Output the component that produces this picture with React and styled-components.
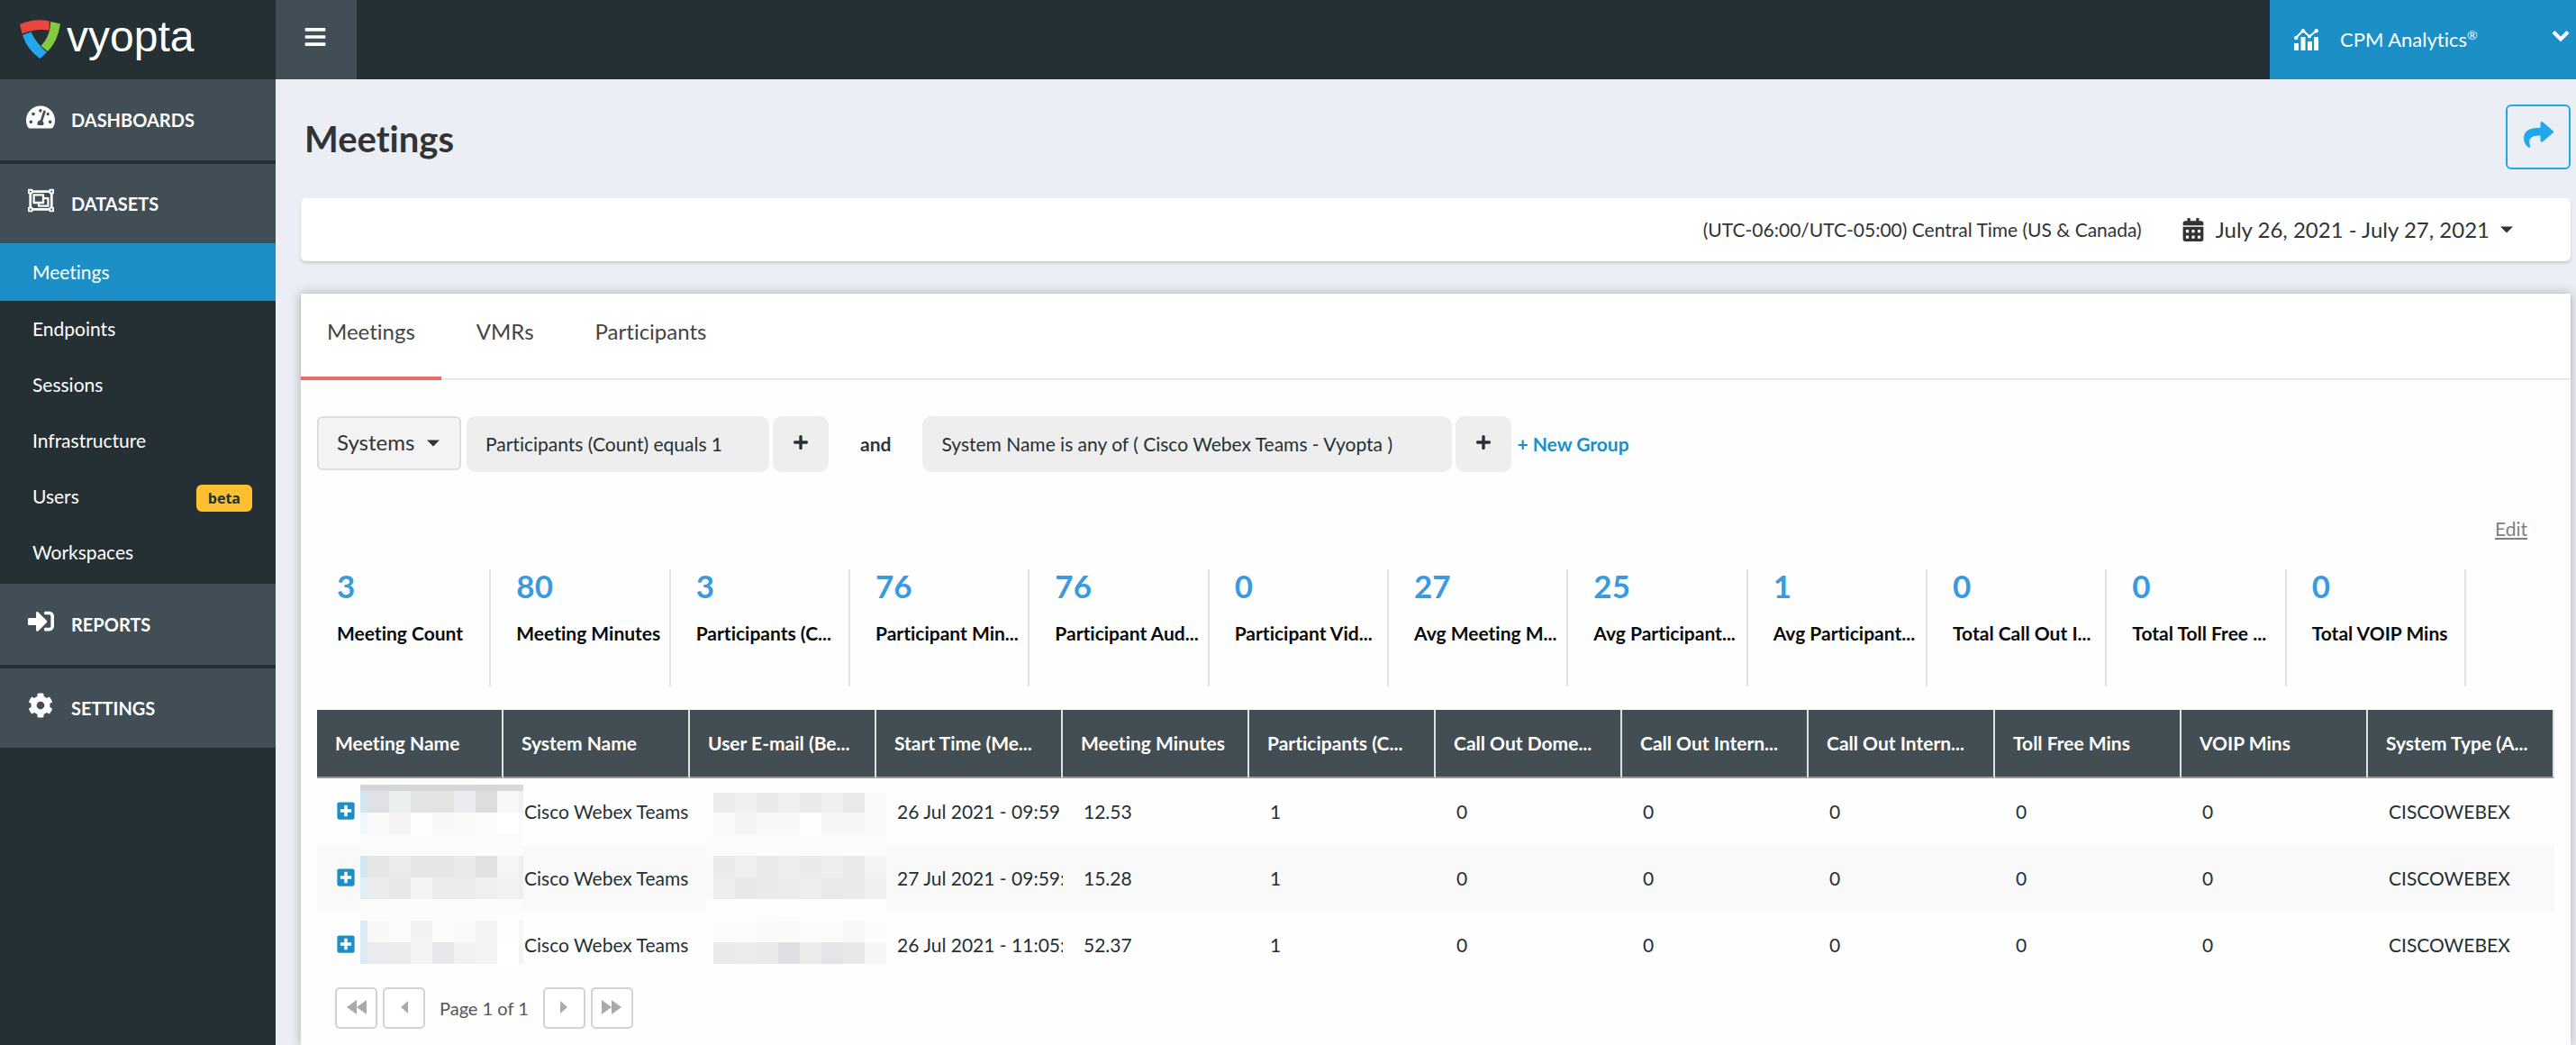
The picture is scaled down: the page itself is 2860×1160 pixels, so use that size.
import React from "react";
import styled, { createGlobalStyle } from "styled-components";
import {
  FaBars,
  FaCalendarAlt,
  FaCog,
  FaPlus,
  FaPlusSquare,
  FaRegObjectGroup,
  FaShare,
  FaSignInAlt,
  FaTachometerAlt,
} from "react-icons/fa";

const color = {
  dark: "#253035",
  slate: "#424e55",
  blue: "#1b8fc6",
  sky: "#22a7ea",
  number: "#3b9ade",
  page: "#ebeef4",
  text: "#333333",
};

const GlobalStyle = createGlobalStyle`
  *, *::before, *::after { box-sizing: border-box; }
  body {
    margin: 0;
    background: ${color.page};
    color: ${color.text};
    font-family: Lato, "Liberation Sans", sans-serif;
    font-size: 21px;
    line-height: 26px;
    font-variant-ligatures: none;
  }
  button, select { font: inherit; font-variant-ligatures: none; color: inherit; margin: 0; cursor: pointer; }
  h1, ul, p, dl, dd { margin: 0; padding: 0; }
  ul { list-style: none; }
  svg { display: block; flex: none; }
`;

/* ---------- frame ---------- */

const Page = styled.div`
  display: grid;
  grid-template-columns: 306px minmax(0, 1fr);
  min-height: 100vh;
`;

const Sidebar = styled.aside`
  background: ${color.dark};
  color: #fff;
`;

const Brand = styled.a`
  display: flex;
  align-items: center;
  gap: 6px;
  height: 88px;
  padding-left: 22px;
  color: #fff;
  text-decoration: none;
`;

const BrandName = styled.span`
  font: 48px/52px "Liberation Sans", Arial, sans-serif;
  padding-bottom: 6px;
`;

const Section = styled.a`
  display: flex;
  align-items: center;
  gap: 14px;
  height: ${(p) => p.$height || 88}px;
  padding-left: 25px;
  background: ${color.slate};
  color: #fff;
  font-size: 20px;
  font-weight: 700;
  text-decoration: none;
  & + & { margin-top: 4px; }
`;

const SectionIcon = styled.span`
  display: flex;
  justify-content: center;
  width: 40px;
  padding-bottom: 7px;
`;

const SubList = styled.ul`
  padding-bottom: 4px;
`;

const SubLink = styled.a`
  display: flex;
  align-items: center;
  justify-content: space-between;
  height: ${(p) => (p.$active ? 64 : 62)}px;
  padding: 0 26px 0 36px;
  background: ${(p) => (p.$active ? color.blue : "transparent")};
  color: #fff;
  text-decoration: none;
`;

const Badge = styled.span`
  margin-top: 4px;
  padding: 0 13px;
  border-radius: 6px;
  background: #fec02f;
  color: ${color.dark};
  font: 700 16px/30px "Open Sans", "Noto Sans", sans-serif;
`;

const Content = styled.div`
  display: flex;
  flex-direction: column;
  min-width: 0;
`;

const TopBar = styled.header`
  display: flex;
  justify-content: space-between;
  height: 88px;
  background: ${color.dark};
  color: #fff;
`;

const MenuButton = styled.button`
  display: flex;
  align-items: center;
  justify-content: center;
  width: 90px;
  padding: 0 2px 7px 0;
  border: 0;
  background: ${color.slate};
  && { color: #fff; }
`;

const ProductButton = styled.button`
  display: flex;
  align-items: center;
  gap: 24px;
  width: 340px;
  padding: 0 7px 0 27px;
  border: 0;
  background: ${color.blue};
  && { color: #fff; font-size: 22px; }
`;

const ProductName = styled.span`
  flex: 1;
  text-align: left;
  sup { font-size: 14px; line-height: 0; }
`;

const Chevron = styled.svg`
  margin-bottom: 10px;
`;

const Main = styled.main`
  display: flex;
  flex: 1;
  flex-direction: column;
  padding: 28px 6px 0 28px;
`;

const TitleRow = styled.div`
  display: flex;
  align-items: center;
  justify-content: space-between;
  padding-left: 4px;
  margin-bottom: 32px;
`;

const Title = styled.h1`
  padding-top: 4px;
  font-size: 40px;
  line-height: 48px;
`;

const ShareButton = styled.button`
  display: flex;
  align-items: center;
  justify-content: center;
  width: 72px;
  height: 72px;
  padding: 0 0 6px;
  border: 2px solid ${color.sky};
  border-radius: 6px;
  background: transparent;
  && { color: ${color.sky}; }
`;

const RangeBar = styled.div`
  display: flex;
  align-items: center;
  justify-content: flex-end;
  gap: 44px;
  height: 70px;
  margin-bottom: 36px;
  padding-right: 64px;
  border-radius: 6px;
  background: #fff;
  box-shadow: 0 2px 3px rgba(40, 50, 60, 0.18);
`;

const RangeButton = styled.button`
  display: flex;
  align-items: center;
  gap: 12px;
  padding: 0;
  border: 0;
  background: transparent;
  && { font-size: 24px; }
`;

/* ---------- card ---------- */

const Card = styled.section`
  flex: 1;
  background: #fefefe;
  box-shadow: 0 0 12px rgba(40, 50, 60, 0.32);
`;

const TabList = styled.div`
  display: flex;
  gap: 10px;
  height: 94px;
  background: #fff;
  box-shadow: 0 1px 2px rgba(0, 0, 0, 0.2);
`;

const Tab = styled.button`
  height: 96px;
  padding: 28px 29px 36px;
  border: 0;
  border-bottom: 4px solid ${(p) => (p.$active ? "#ee6c68" : "transparent")};
  background: transparent;
  && { font-size: 24px; line-height: 28px; color: #444; }
`;

const Filters = styled.div`
  display: flex;
  gap: 4px;
  padding: 42px 18px 0;
`;

const SystemsPicker = styled.label`
  display: grid;
  align-items: center;
  width: 160px;
  height: 60px;
  margin-right: 2px;
  border: 2px solid #dcdcdc;
  border-radius: 6px;
  background: #f3f3f3;
  svg { grid-area: 1 / 1; justify-self: end; margin-right: 22px; pointer-events: none; }
`;

const SystemsSelect = styled.select`
  grid-area: 1 / 1;
  height: 100%;
  padding: 0 40px 2px 20px;
  border: 0;
  appearance: none;
  background: transparent;
  && { font-size: 24px; }
`;

const Pill = styled.button`
  min-width: ${(p) => p.$min}px;
  height: 62px;
  padding: 0 21px;
  border: 0;
  border-radius: 10px;
  background: #eeeeee;
  text-align: left;
  && { color: ${color.dark}; }
`;

const AddButton = styled.button`
  display: flex;
  align-items: center;
  justify-content: center;
  width: 62px;
  height: 62px;
  padding: 0 0 4px;
  border: 0;
  border-radius: 10px;
  background: #eeeeee;
  && { color: ${color.dark}; }
`;

const Joiner = styled.span`
  padding: 0 31px;
  font-weight: 700;
  line-height: 62px;
`;

const NewGroup = styled.button`
  padding: 0 2px;
  border: 0;
  background: transparent;
  && { color: ${color.blue}; font-weight: 700; }
`;

const EditRow = styled.div`
  display: flex;
  justify-content: flex-end;
  padding: 50px 48px 32px 0;
`;

const EditLink = styled.a`
  color: #808080;
  text-underline-offset: 2px;
`;

const Stats = styled.dl`
  display: grid;
  grid-template-columns: repeat(12, minmax(0, 1fr));
  padding: 0 116px 0 12px;
  margin-bottom: 26px;
`;

const Stat = styled.div`
  display: flex;
  flex-direction: column-reverse;
  justify-content: flex-end;
  gap: 23px;
  height: 130px;
  padding-left: 28px;
  border-right: 2px solid #e3e3e3;
  white-space: nowrap;
`;

const StatValue = styled.dd`
  color: ${color.number};
  font-size: 35px;
  font-weight: 700;
  line-height: 36px;
`;

const StatLabel = styled.dt`
  color: #0a0a0a;
  font-weight: 700;
  line-height: 24px;
`;

const TableArea = styled.div`
  padding: 0 18px;
`;

const Table = styled.table`
  width: 100%;
  border-collapse: separate;
  border-spacing: 0;
  table-layout: fixed;
  white-space: nowrap;
`;

const HeadCell = styled.th`
  height: 76px;
  padding: 0 0 0 20px;
  border-right: 2px solid #dfe2e3;
  border-bottom: 2px solid #999999;
  background: #424e53;
  color: #fff;
  font-weight: 700;
  text-align: left;
`;

const Row = styled.tr`
  background: ${(p) => (p.$striped ? "#f9f9f9" : "#fefefe")};
`;

const Cell = styled.td`
  position: relative;
  height: 74px;
  padding: 0 0 0 23px;
  overflow: ${(p) => (p.$open ? "visible" : "hidden")};
  color: ${color.dark};
`;

const ExpandCell = styled(Cell)`
  padding-left: 21px;
`;

const ExpandButton = styled.button`
  display: block;
  padding: 0 0 2px;
  border: 0;
  background: transparent;
  && { color: ${color.blue}; }
`;

const Mosaic = styled.svg`
  position: absolute;
  top: 0;
  left: ${(p) => p.$left}px;
`;

const Pager = styled.nav`
  display: flex;
  align-items: center;
  gap: 6px;
  padding: 10px 0 18px 38px;
`;

const PagerButton = styled.button`
  display: flex;
  align-items: center;
  justify-content: center;
  width: 47px;
  height: 46px;
  padding: 0 0 2px;
  border: 2px solid #d2d2d2;
  border-radius: 5px;
  background: #fff;
`;

const PagerText = styled.p`
  padding: 0 10px;
  color: #555;
  font-size: 20px;
`;

/* ---------- drawings ---------- */

const Logo = () => (
  <svg width="46" height="44" viewBox="22 22 46 44" aria-hidden="true">
    <path d="M22 27Q38 20 55 23.500L54.500 33.500Q39 31.500 24.500 37.500Z" fill="#e9463f" />
    <path d="M25 39L34.500 35.500Q40 48 52 58L44.500 65Q30 55 25 39Z" fill="#22a7ea" />
    <path d="M56.300 24L67 26.500Q64 46 53 57L45.500 51Q56 40 56.300 24Z" fill="#84c944" />
  </svg>
);

const AnalyticsIcon = () => (
  <svg width="27" height="24" viewBox="0 0 27 24" fill="#fff" aria-hidden="true">
    <path d="M0 16h5v8H0zM7.500 9h5v15h-5zM15 14h5v10h-5zM22 9h5v15h-5z" />
    <path d="M2 10L10 2l7 6.500L25 2" fill="none" stroke="#fff" strokeWidth="2" />
    <circle cx="2.300" cy="10" r="2.200" />
    <circle cx="10" cy="2.300" r="2.200" />
    <circle cx="17" cy="8.500" r="2" />
    <circle cx="24.700" cy="2.300" r="2.200" />
  </svg>
);

const Caret = () => (
  <svg width="14" height="8" viewBox="0 0 14 8" fill={color.text} aria-hidden="true">
    <path d="M0 0.500h14L7 7.500z" />
  </svg>
);

const arrows = {
  first: "M11 0v16L0 8zM22 0v16L11 8z",
  prev: "M15 1v14L7 8z",
  next: "M7 1v14l8-7z",
  last: "M0 0v16l11-8zM11 0v16l11-8z",
};

const Arrow = ({ kind }) => (
  <svg width="22" height="16" viewBox="0 0 22 16" fill="#aaaaaa" aria-hidden="true">
    <path d={arrows[kind]} />
  </svg>
);

/* Pixelated cover over private values: bands of tiles, top to bottom. */
const nameCover = [
  [
    { y: 7, h: 7, fills: ["#d5d6d8", "#d5d6d8", "#d5d6d8", "#d5d6d8", "#d5d6d8", "#d5d6d8", "#d4d5d7", "#d7d8da", "#d7d8da"] },
    { y: 14, h: 24, fills: ["#cfe7f3", "#dfe1e4", "#ebeeee", "#e2e3e5", "#e2e4e3", "#e9ebee", "#dcdedd", "#f8f8f8", "#f1f1f1"] },
    { y: 38, h: 24, fills: ["#eef8fc", "#fafafa", "#f4f4f4", "#fcfefe", "#f9f8f9", "#f8faf9", "#fcfcfc", "#ffffff", "#fafafa"] },
    { y: 62, h: 12, fills: Array(9).fill("#fbfbfb") },
  ],
  [
    { y: 0, h: 12, fills: Array(9).fill("#fbfbfb") },
    { y: 12, h: 24, fills: ["#cfe7f3", "#e4e6e5", "#ebebeb", "#e5e7e6", "#e3e5e7", "#e9ebea", "#e0e2e1", "#f5f5f5", "#eeeeee"] },
    { y: 36, h: 24, fills: ["#dfeff7", "#ececec", "#e7e9e8", "#f3f3f3", "#eaeceb", "#ebebeb", "#eff1f0", "#f2f2f2", "#f0f0f0"] },
    { y: 60, h: 14, fills: Array(9).fill("#fcfcfc") },
  ],
  [
    { y: 0, h: 10, fills: Array(9).fill("#fcfcfc") },
    { y: 10, h: 24, fills: ["#d8ebf6", "#f8f8f8", "#fbfdfc", "#f2f2f2", "#fafdfc", "#f8faf9", "#f2f4f3", "#fdfffe", "#f8f8f8"] },
    { y: 34, h: 24, fills: ["#d8ebf6", "#e9ebee", "#ebedec", "#f4f4f4", "#e7e8eb", "#f1f3f2", "#f3f5f4", "#ffffff", "#f4f4f4"] },
  ],
];

const mailCover = [
  [
    { y: 16, h: 22, fills: ["", "#ececec", "#eff1f0", "#e9ebea", "#eef0ef", "#e9ebea", "#eeeff1", "#e8eae9", "#fafafa"] },
    { y: 38, h: 24, fills: ["", "#fafafa", "#f4f4f5", "#f8f8f8", "#f8f8f8", "#fdfdfd", "#f5f7f6", "#f5f7f6", "#fafafa"] },
    { y: 62, h: 12, fills: Array(9).fill("#fbfbfb") },
  ],
  [
    { y: 0, h: 12, fills: Array(9).fill("#fbfbfb") },
    { y: 12, h: 24, fills: ["", "#e9ebea", "#eef0ef", "#e8eae9", "#eceeed", "#e9ebea", "#eeeeee", "#e8eae9", "#f3f3f3"] },
    { y: 36, h: 24, fills: ["", "#eceeed", "#e7e9e8", "#eaeaea", "#ebebeb", "#eceeed", "#e8eae9", "#e9ebea", "#f0f0f0"] },
    { y: 60, h: 14, fills: Array(9).fill("#fdfdfd") },
  ],
  [
    { y: 0, h: 10, fills: Array(9).fill("#fdfdfd") },
    { y: 10, h: 24, fills: ["", "#fbfbfb", "#fbfbfb", "#f8fbfa", "#f9f9f9", "#fbfbfb", "#fbfbfb", "#f7f7f8", "#fcfcfc"] },
    { y: 34, h: 24, fills: ["", "#e9ebea", "#ebedec", "#e9ebea", "#dfe0e3", "#ebedec", "#e4e5e8", "#e7e9e8", "#f6f6f6"] },
  ],
];

const Cover = ({ bands, left, width }) => (
  <Mosaic $left={left} width={width} height="74" shapeRendering="crispEdges" role="img" aria-label="Hidden">
    {bands.map((band) =>
      band.fills.map((fill, i) =>
        fill ? (
          <rect
            key={`${band.y}-${i}`}
            x={i === 0 ? 0 : i * 24 - 16}
            y={band.y}
            width={i === 0 ? 8 : 24}
            height={band.h}
            fill={fill}
          />
        ) : null
      )
    )}
  </Mosaic>
);

/* ---------- data ---------- */

const datasetLinks = ["Meetings", "Endpoints", "Sessions", "Infrastructure", "Users", "Workspaces"];

const stats = [
  ["3", "Meeting Count"],
  ["80", "Meeting Minutes"],
  ["3", "Participants (C..."],
  ["76", "Participant Min..."],
  ["76", "Participant Aud..."],
  ["0", "Participant Vid..."],
  ["27", "Avg Meeting M..."],
  ["25", "Avg Participant..."],
  ["1", "Avg Participant..."],
  ["0", "Total Call Out I..."],
  ["0", "Total Toll Free ..."],
  ["0", "Total VOIP Mins"],
];

const columns = [
  "Meeting Name",
  "System Name",
  "User E-mail (Be...",
  "Start Time (Me...",
  "Meeting Minutes",
  "Participants (C...",
  "Call Out Dome...",
  "Call Out Intern...",
  "Call Out Intern...",
  "Toll Free Mins",
  "VOIP Mins",
  "System Type (A...",
];

const meetings = [
  { start: "26 Jul 2021 - 09:59", minutes: "12.53" },
  { start: "27 Jul 2021 - 09:59:", minutes: "15.28" },
  { start: "26 Jul 2021 - 11:05:0", minutes: "52.37" },
];

export default function App() {
  return (
    <>
      <GlobalStyle />
      <Page>
        <Sidebar>
          <Brand href="#home">
            <Logo />
            <BrandName>vyopta</BrandName>
          </Brand>
          <nav>
            <Section href="#dashboards" $height={90}>
              <SectionIcon><FaTachometerAlt size={32} /></SectionIcon>
              DASHBOARDS
            </Section>
            <Section href="#datasets">
              <SectionIcon><FaRegObjectGroup size={29} /></SectionIcon>
              DATASETS
            </Section>
            <SubList>
              {datasetLinks.map((name) => (
                <li key={name}>
                  <SubLink href={`#${name.toLowerCase()}`} $active={name === "Meetings"}>
                    {name}
                    {name === "Users" && <Badge>beta</Badge>}
                  </SubLink>
                </li>
              ))}
            </SubList>
            <Section href="#reports" $height={90}>
              <SectionIcon><FaSignInAlt size={29} /></SectionIcon>
              REPORTS
            </Section>
            <Section href="#settings">
              <SectionIcon><FaCog size={28} /></SectionIcon>
              SETTINGS
            </Section>
          </nav>
        </Sidebar>

        <Content>
          <TopBar>
            <MenuButton aria-label="Toggle menu"><FaBars size={26} /></MenuButton>
            <ProductButton aria-haspopup="true">
              <AnalyticsIcon />
              <ProductName>CPM Analytics<sup>®</sup></ProductName>
              <Chevron width="20" height="13" viewBox="0 0 20 13" aria-hidden="true">
                <path d="M2 2.500l8 8 8-8" fill="none" stroke="#fff" strokeWidth="4" />
              </Chevron>
            </ProductButton>
          </TopBar>

          <Main>
            <TitleRow>
              <Title>Meetings</Title>
              <ShareButton aria-label="Share"><FaShare size={33} /></ShareButton>
            </TitleRow>

            <RangeBar>
              <span>(UTC-06:00/UTC-05:00) Central Time (US &amp; Canada)</span>
              <RangeButton aria-haspopup="true">
                <FaCalendarAlt size={26} />
                July 26, 2021 - July 27, 2021
                <Caret />
              </RangeButton>
            </RangeBar>

            <Card>
              <TabList role="tablist">
                <Tab role="tab" aria-selected="true" $active>Meetings</Tab>
                <Tab role="tab" aria-selected="false">VMRs</Tab>
                <Tab role="tab" aria-selected="false">Participants</Tab>
              </TabList>

              <Filters>
                <SystemsPicker>
                  <SystemsSelect aria-label="Filter by">
                    <option>Systems</option>
                  </SystemsSelect>
                  <Caret />
                </SystemsPicker>
                <Pill $min={336}>Participants (Count) equals 1</Pill>
                <AddButton aria-label="Add condition"><FaPlus size={18} /></AddButton>
                <Joiner>and</Joiner>
                <Pill $min={588}>System Name is any of ( Cisco Webex Teams - Vyopta )</Pill>
                <AddButton aria-label="Add condition"><FaPlus size={18} /></AddButton>
                <NewGroup>+ New Group</NewGroup>
              </Filters>

              <EditRow>
                <EditLink href="#edit">Edit</EditLink>
              </EditRow>

              <Stats>
                {stats.map(([value, label], i) => (
                  <Stat key={i}>
                    <StatLabel>{label}</StatLabel>
                    <StatValue>{value}</StatValue>
                  </Stat>
                ))}
              </Stats>

              <TableArea>
                <Table>
                  <thead>
                    <tr>
                      {columns.map((name, i) => (
                        <HeadCell key={i} scope="col">{name}</HeadCell>
                      ))}
                    </tr>
                  </thead>
                  <tbody>
                    {meetings.map((meeting, i) => (
                      <Row key={i} $striped={i === 1}>
                        <ExpandCell $open>
                          <ExpandButton aria-label="Expand row"><FaPlusSquare size={22} /></ExpandButton>
                          <Cover bands={nameCover[i]} left={48} width={181} />
                        </ExpandCell>
                        <Cell>Cisco Webex Teams</Cell>
                        <Cell $open>
                          <Cover bands={mailCover[i]} left={18} width={200} />
                        </Cell>
                        <Cell>{meeting.start}</Cell>
                        <Cell>{meeting.minutes}</Cell>
                        <Cell>1</Cell>
                        <Cell>0</Cell>
                        <Cell>0</Cell>
                        <Cell>0</Cell>
                        <Cell>0</Cell>
                        <Cell>0</Cell>
                        <Cell>CISCOWEBEX</Cell>
                      </Row>
                    ))}
                  </tbody>
                </Table>
              </TableArea>

              <Pager aria-label="Pages">
                <PagerButton aria-label="First page"><Arrow kind="first" /></PagerButton>
                <PagerButton aria-label="Previous page"><Arrow kind="prev" /></PagerButton>
                <PagerText>Page 1 of 1</PagerText>
                <PagerButton aria-label="Next page"><Arrow kind="next" /></PagerButton>
                <PagerButton aria-label="Last page"><Arrow kind="last" /></PagerButton>
              </Pager>
            </Card>
          </Main>
        </Content>
      </Page>
    </>
  );
}
